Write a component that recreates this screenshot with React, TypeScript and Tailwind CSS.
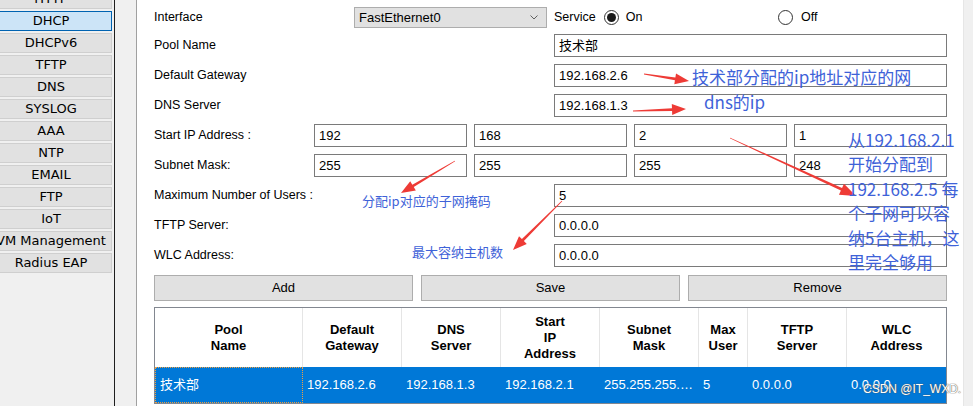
import React from "react";

const SIDE = ["HTTP", "DHCP", "DHCPv6", "TFTP", "DNS", "SYSLOG", "AAA", "NTP", "EMAIL", "FTP", "IoT", "VM Management", "Radius EAP"];

function Arrow({ x1, y1, x2, y2, head = 14, hw = 11 }: { x1: number; y1: number; x2: number; y2: number; head?: number; hw?: number }) {
  const dx = x2 - x1;
  const dy = y2 - y1;
  const L = Math.hypot(dx, dy);
  const ux = dx / L;
  const uy = dy / L;
  const nx = -uy;
  const ny = ux;
  const bx = x2 - ux * head;
  const by = y2 - uy * head;
  const pts = [
    [x1 + nx * 0.4, y1 + ny * 0.4],
    [bx + nx * 1.4, by + ny * 1.4],
    [bx + nx * (hw / 2), by + ny * (hw / 2)],
    [x2, y2],
    [bx - nx * (hw / 2), by - ny * (hw / 2)],
    [bx - nx * 1.4, by - ny * 1.4],
    [x1 - nx * 0.4, y1 - ny * 0.4],
  ];
  return <polygon points={pts.map((p) => p.join(",")).join(" ")} fill="#ee3b36" />;
}

function Input({ value, className = "" }: { value: string; className?: string }) {
  return (
    <div className={"h-[23px] border border-[#7a7a7a] bg-white flex items-center pl-[4px] text-[13px] text-black " + className}>
      {value}
    </div>
  );
}

function Radio({ checked }: { checked: boolean }) {
  return (
    <div className="w-[15px] h-[15px] rounded-full border border-[#333] bg-white flex items-center justify-center">
      {checked && <div className="w-[9px] h-[9px] rounded-full bg-[#1a1a1a]" />}
    </div>
  );
}

const COLS = ["w-[148px]", "w-[99px]", "w-[99px]", "w-[99px]", "w-[99px]", "w-[49px]", "w-[99px]", "w-[99px]"];
const HEAD: React.ReactNode[] = [
  <>Pool<br />Name</>,
  <>Default<br />Gateway</>,
  <>DNS<br />Server</>,
  <>Start<br />IP<br />Address</>,
  <>Subnet<br />Mask</>,
  <>Max<br />User</>,
  <>TFTP<br />Server</>,
  <>WLC<br />Address</>,
];
const ROW = ["技术部", "192.168.2.6", "192.168.1.3", "192.168.2.1", "255.255.255.…", "5", "0.0.0.0", "0.0.0.0"];

export default function App() {
  return (
    <div
      className="relative flex w-[973px] h-[406px] overflow-hidden bg-white text-black"
      style={{ fontFamily: '"Liberation Sans", "Noto Sans CJK SC", sans-serif' }}
    >
      {/* sidebar */}
      <aside className="w-[115px] shrink-0 bg-[#f0f0f0] border-r border-[#1e1e1e]">
        <div
          className="mt-[-11px] ml-[-10px] w-[122px] flex flex-col gap-[2px]"
          style={{ fontFamily: '"DejaVu Sans", sans-serif' }}
        >
          {SIDE.map((s) => (
            <div
              key={s}
              className={
                "h-[20px] flex items-center justify-center whitespace-nowrap text-[13px] border " +
                (s === "DHCP" ? "bg-[#cce4f7] border-[#0063b1]" : "bg-[#e1e1e1] border-[#cfcfcf]")
              }
            >
              {s}
            </div>
          ))}
        </div>
      </aside>
      <div className="w-[22px] shrink-0 bg-[#f0f0f0] border-r border-[#a0a0a0]" />

      {/* main */}
      <main className="w-[826px] shrink-0 pl-[17px] pr-[16px] pt-[7px] flex flex-col text-[12.5px]">
        <div className="h-[21px] flex items-center">
          <div className="w-[200px]">Interface</div>
          <div className="w-[193px] h-[21px] border border-[#adadad] bg-[#e1e1e1] flex items-center pl-[4px] pr-[8px] text-[13px]">
            <span className="flex-1">FastEthernet0</span>
            <svg width="8" height="5" viewBox="0 0 8 5">
              <path d="M0.5 0.5 L4 4 L7.5 0.5" fill="none" stroke="#606060" strokeWidth="1" />
            </svg>
          </div>
          <div className="ml-[7px] w-[224px] flex items-center">
            <span>Service</span>
            <div className="ml-[8px]"><Radio checked /></div>
            <span className="ml-[7px]">On</span>
          </div>
          <div className="flex items-center">
            <Radio checked={false} />
            <span className="ml-[8px]">Off</span>
          </div>
        </div>

        <div className="mt-[6px] flex flex-col gap-[7px]">
          <div className="flex items-center">
            <div className="w-[400px]">Pool Name</div>
            <Input value="技术部" className="flex-1" />
          </div>
          <div className="flex items-center">
            <div className="w-[400px]">Default Gateway</div>
            <Input value="192.168.2.6" className="flex-1" />
          </div>
          <div className="flex items-center">
            <div className="w-[400px]">DNS Server</div>
            <Input value="192.168.1.3" className="flex-1" />
          </div>
          <div className="flex items-center">
            <div className="w-[160px]">Start IP Address :</div>
            <div className="flex-1 flex gap-[7px]">
              {["192", "168", "2", "1"].map((v, i) => (
                <Input key={i} value={v} className="w-[153px]" />
              ))}
            </div>
          </div>
          <div className="flex items-center">
            <div className="w-[160px]">Subnet Mask:</div>
            <div className="flex-1 flex gap-[7px]">
              {["255", "255", "255", "248"].map((v, i) => (
                <Input key={i} value={v} className="w-[153px]" />
              ))}
            </div>
          </div>
          <div className="flex items-center">
            <div className="w-[400px]">Maximum Number of Users :</div>
            <Input value="5" className="flex-1" />
          </div>
          <div className="flex items-center">
            <div className="w-[400px]">TFTP Server:</div>
            <Input value="0.0.0.0" className="flex-1" />
          </div>
          <div className="flex items-center">
            <div className="w-[400px]">WLC Address:</div>
            <Input value="0.0.0.0" className="flex-1" />
          </div>
        </div>

        <div className="mt-[8px] flex gap-[8px]">
          {["Add", "Save", "Remove"].map((b) => (
            <div
              key={b}
              className="flex-1 h-[26px] border border-[#adadad] bg-[#e1e1e1] flex items-center justify-center text-[13px]"
            >
              {b}
            </div>
          ))}
        </div>

        <div className="mt-[6px] border border-[#828790] bg-white">
          <div className="flex h-[59px]">
            {HEAD.map((h, i) => (
              <div
                key={i}
                className={
                  COLS[i] +
                  " shrink-0 flex items-center justify-center text-center font-bold text-[13px] leading-[16px] " +
                  (i < 7 ? "border-r border-[#e5e5e5]" : "")
                }
              >
                <div>{h}</div>
              </div>
            ))}
          </div>
          <div className="flex h-[36px] bg-[#0078d7] text-white text-[13px]">
            {ROW.map((r, i) => (
              <div
                key={i}
                className={
                  COLS[i] +
                  " shrink-0 flex items-center pl-[4px] whitespace-nowrap overflow-hidden " +
                  (i === 0 ? "border border-dotted border-[#f0a040] pl-[3px]" : "")
                }
              >
                {r}
              </div>
            ))}
          </div>
        </div>
      </main>
      <div className="flex-1 bg-[#f0f0f0] border-l border-[#e6e6e6]" />

      {/* annotations */}
      <svg className="absolute inset-0 pointer-events-none" width="973" height="406">
        <Arrow x1={644} y1={74} x2={689} y2={81} />
        <Arrow x1={633} y1={111} x2={686} y2={109} />
        <Arrow x1={455} y1={161} x2={401} y2={193} />
        <Arrow x1={562} y1={201} x2={513} y2={250} />
        <Arrow x1={730} y1={138} x2={856} y2={196} head={16} hw={12} />
      </svg>
      <div
        className="absolute inset-0 pointer-events-none text-[#3e62d8]"
        style={{ fontFamily: '"Noto Sans CJK SC", sans-serif' }}
      >
        <div className="absolute left-[692px] top-[65px] text-[17px] leading-[24px] whitespace-nowrap">技术部分配的ip地址对应的网</div>
        <div className="absolute left-[704px] top-[90px] text-[17px] leading-[24px] whitespace-nowrap">dns的ip</div>
        <div className="absolute left-[362px] top-[192px] text-[13px] leading-[18px] whitespace-nowrap">分配ip对应的子网掩码</div>
        <div className="absolute left-[412px] top-[243px] text-[13px] leading-[18px] whitespace-nowrap">最大容纳主机数</div>
        <div className="absolute left-[848px] top-[128px] text-[17px] leading-[24.4px] whitespace-nowrap">
          从192.168.2.1<br />开始分配到<br />192.168.2.5 每<br />个子网可以容<br />纳5台主机，这<br />里完全够用
        </div>
      </div>
      <div
        className="absolute left-[863px] top-[381px] text-[12px] leading-[16px] text-white whitespace-nowrap [text-shadow:0_0_1px_#555,0_0_1px_#555]"
        style={{ fontFamily: '"Liberation Sans", sans-serif' }}
      >
        CSDN @IT_WXD.
      </div>
    </div>
  );
}
